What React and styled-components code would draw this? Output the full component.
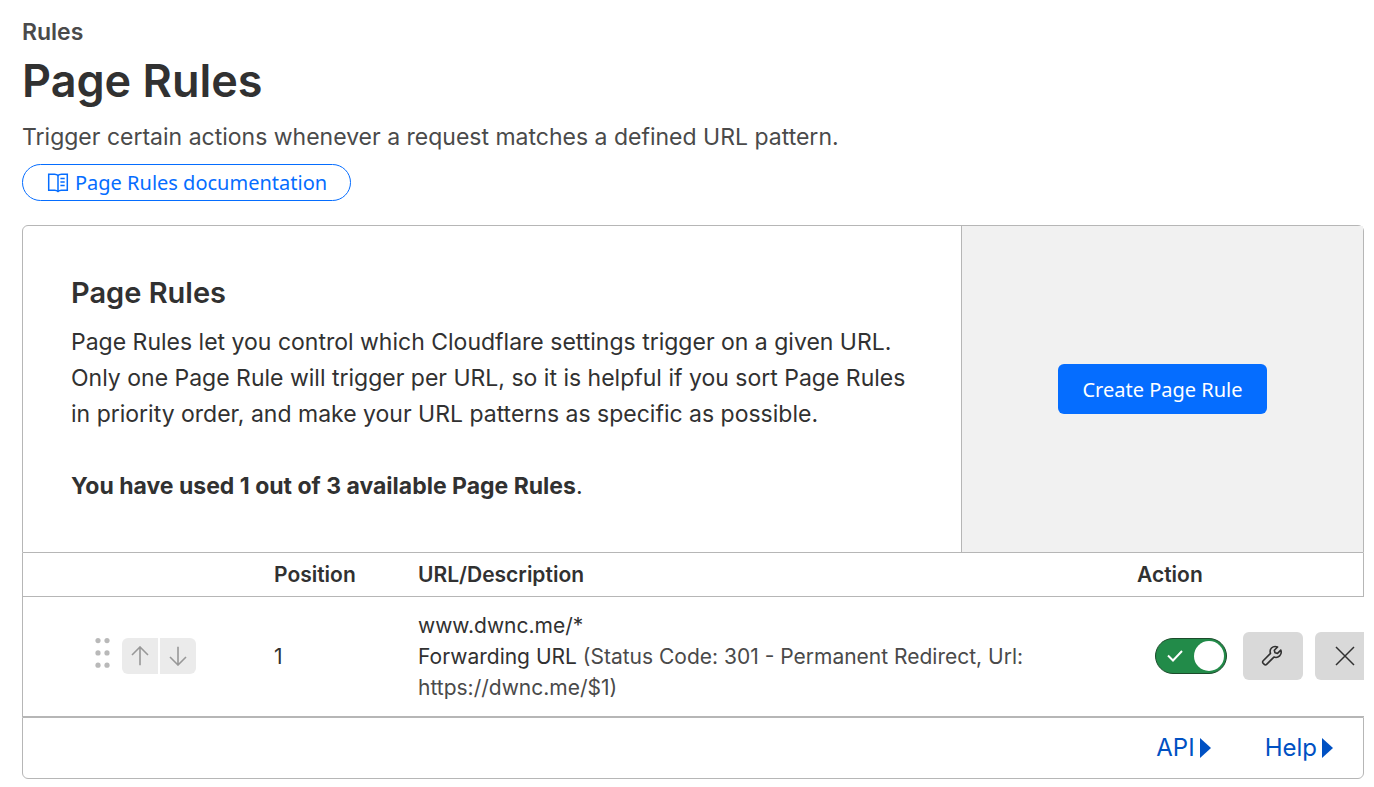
import styled, { createGlobalStyle, css } from 'styled-components';

const GlobalStyle = createGlobalStyle`
  *, *::before, *::after {
    box-sizing: border-box;
  }
  body {
    margin: 0;
    background: #fff;
    color: #313131;
    font-family: Inter, "Liberation Sans", sans-serif;
    font-size: 23px;
    line-height: 36px;
  }
  h1, h2, p {
    margin: 0;
  }
  button {
    font-family: inherit;
    cursor: pointer;
  }
`;

const line = '#b6b6b6';

const Page = styled.main`
  padding: 14px 10px 8px 22px;
`;

const Section = styled.p`
  font-weight: 600;
  color: #4a4a4a;
`;

const Title = styled.h1`
  font-size: 45px;
  line-height: 62px;
  font-weight: 600;
`;

const Lead = styled.p`
  margin-top: 7px;
  color: #4a4a4a;
`;

const DocsLink = styled.a`
  display: inline-flex;
  align-items: center;
  gap: 6px;
  height: 37px;
  margin: 9px 0 24px;
  padding: 0 23px 0 24px;
  border: 1px solid #056dff;
  border-radius: 20px;
  color: #056dff;
  font-family: "Noto Sans", sans-serif;
  font-size: 20px;
  text-decoration: none;
  vertical-align: top;
`;

const Summary = styled.section`
  display: grid;
  grid-template-columns: 7fr 3fr;
  border: 1px solid ${line};
  border-radius: 6px 6px 0 0;
`;

const SummaryText = styled.div`
  padding: 48px;
`;

const SummaryTitle = styled.h2`
  margin-bottom: 12px;
  font-size: 29px;
  line-height: 38px;
  font-weight: 600;
`;

const Usage = styled.p`
  padding-top: 36px;
`;

const SummarySide = styled.div`
  display: flex;
  align-items: center;
  justify-content: center;
  border-left: 1px solid ${line};
  background: #f1f1f1;
`;

const CreateButton = styled.button`
  height: 50px;
  padding: 0 24px;
  border: 0;
  border-radius: 6px;
  background: #056dff;
  color: #fff;
  font-family: "Noto Sans", sans-serif;
  font-size: 20px;
`;

const TableWrap = styled.div`
  overflow: hidden;
  border-left: 1px solid ${line};
`;

const Table = styled.table`
  width: 100%;
  table-layout: fixed;
  border-collapse: separate;
  border-spacing: 0;
  font-size: 21px;
  line-height: 31px;
`;

const HeadCell = styled.th`
  width: ${(p) => p.$width || 'auto'};
  height: 44px;
  padding: 0 12px;
  border-bottom: 1px solid ${line};
  font-weight: 600;
  text-align: left;
  &:last-child {
    border-right: 1px solid ${line};
  }
`;

const Cell = styled.td`
  height: 120px;
  padding: 11px 12px 12px;
  border-bottom: 1px solid ${line};
`;

const Detail = styled.span`
  color: #4a4a4a;
`;

const OrderControls = styled.div`
  display: flex;
  align-items: flex-start;
  gap: 12px;
  padding-left: 60px;
`;

const OrderButtons = styled.div`
  display: flex;
  gap: 2px;
`;

const iconButton = css`
  display: flex;
  flex: none;
  align-items: center;
  justify-content: center;
  padding: 0;
  border: 0;
`;

const OrderButton = styled.button`
  ${iconButton}
  width: 36px;
  height: 36px;
  border-radius: ${(p) => (p.$side === 'left' ? '6px 0 0 6px' : '0 6px 6px 0')};
  background: #ebebeb;
  color: #989898;
`;

const RowActions = styled.div`
  display: flex;
  align-items: center;
  gap: 12px;
  padding-left: 18px;
`;

const ActionButton = styled.button`
  ${iconButton}
  width: 60px;
  height: 48px;
  border-radius: 6px;
  background: #d9d9d9;
  color: #313131;
`;

const Toggle = styled.label`
  display: flex;
  flex: none;
  align-items: center;
  justify-content: space-between;
  width: 72px;
  height: 36px;
  margin-right: 4px;
  padding: 0 2px 0 11px;
  border: 1px solid #1c4b2b;
  border-radius: 18px;
  background: #228b49;
  cursor: pointer;
  &:not(:has(input:checked)) {
    flex-direction: row-reverse;
    padding: 0 11px 0 2px;
    background: #797979;
  }
`;

const ToggleInput = styled.input`
  appearance: none;
  width: 30px;
  height: 30px;
  margin: 0;
  border-radius: 50%;
  background: #fff;
  cursor: pointer;
`;

const Footer = styled.footer`
  display: flex;
  align-items: center;
  justify-content: flex-end;
  gap: 54px;
  height: 62px;
  padding-right: 30px;
  border: 1px solid ${line};
  border-radius: 0 0 6px 6px;
  font-size: 24px;
`;

const FooterLink = styled.a`
  display: flex;
  align-items: center;
  gap: 5px;
  color: #0051c3;
  text-decoration: none;
`;

function BookIcon() {
  return (
    <svg width="22" height="20" viewBox="0 0 22 20" fill="none" stroke="currentColor" strokeWidth="1.5" aria-hidden="true">
      <path d="M11 2.5C10 1.4 9 1.2 7.5 1.2H1.7v16h6.1c1.3 0 2.3.3 3.2 1.3.9-1 1.9-1.3 3.2-1.3h6.100v-16h-5.800C13 1.200 12 1.400 11 2.500z" />
      <path d="M11 2.500v16M13.400 5.500h4.300M13.400 9h4.300M13.400 12.500h4.300" />
    </svg>
  );
}

function DragIcon() {
  return (
    <svg width="15" height="30" viewBox="0 0 15 30" fill="#b9b9b9" aria-hidden="true">
      {[2, 14.3, 26.6].map((y) => (
        <g key={y}>
          <circle cx="3" cy={y + 0.6} r="2.6" />
          <circle cx="12" cy={y + 0.6} r="2.6" />
        </g>
      ))}
    </svg>
  );
}

function ArrowIcon({ down }) {
  return (
    <svg width="20" height="20" viewBox="0 0 20 20" fill="none" stroke="currentColor" strokeWidth="1.6" aria-hidden="true">
      <path d={down ? 'M10 .8v18M2 11l8 8 8-8' : 'M10 19.2v-18M2 9l8-8 8 8'} />
    </svg>
  );
}

function CheckIcon() {
  return (
    <svg width="16" height="12" viewBox="0 0 16 12" fill="none" stroke="#fff" strokeWidth="2" aria-hidden="true">
      <path d="M1 5.5l5 5L15 1" />
    </svg>
  );
}

function WrenchIcon() {
  return (
    <svg width="24" height="24" viewBox="1 0 24 24" fill="none" stroke="currentColor" strokeWidth="1.6" strokeLinejoin="round" aria-hidden="true">
      <path d="M17.600 3c-2.200-.9-4.600-.5-6.100 1-1.400 1.500-1.700 3.500-1 5.400L3.200 16.800c-.8.800-.8 1.700-.1 2.400l1.200 1.200c.7.700 1.600.7 2.300 0l7.300-7.300c2 .7 4.200.3 5.700-1.200 1.600-1.600 2-3.700 1.200-5.800l-3.300 3.300-2.500-.6-.7-2.500z" />
    </svg>
  );
}

function CloseIcon() {
  return (
    <svg width="20" height="20" viewBox="0 0 20 20" fill="none" stroke="currentColor" strokeWidth="1.5" aria-hidden="true">
      <path d="M1 1l18 18M19 1L1 19" />
    </svg>
  );
}

function CaretIcon() {
  return (
    <svg width="11" height="20" viewBox="0 0 11 20" fill="currentColor" aria-hidden="true">
      <path d="M0 0v20l11-10z" />
    </svg>
  );
}

const rules = [
  {
    position: 1,
    url: 'www.dwnc.me/*',
    action: 'Forwarding URL',
    detail: '(Status Code: 301 - Permanent Redirect, Url: https://dwnc.me/$1)',
  },
];

function RuleRow({ rule }) {
  return (
    <tr>
      <Cell>
        <OrderControls>
          <DragIcon />
          <OrderButtons>
            <OrderButton $side="left" aria-label="Move up"><ArrowIcon /></OrderButton>
            <OrderButton $side="right" aria-label="Move down"><ArrowIcon down /></OrderButton>
          </OrderButtons>
        </OrderControls>
      </Cell>
      <Cell>{rule.position}</Cell>
      <Cell>
        {rule.url}
        <br />
        {rule.action} <Detail>{rule.detail}</Detail>
      </Cell>
      <Cell>
        <RowActions>
          <Toggle>
            <CheckIcon />
            <ToggleInput type="checkbox" defaultChecked aria-label="Rule enabled" />
          </Toggle>
          <ActionButton aria-label="Edit"><WrenchIcon /></ActionButton>
          <ActionButton aria-label="Delete"><CloseIcon /></ActionButton>
        </RowActions>
      </Cell>
    </tr>
  );
}

function App() {
  return (
    <>
      <GlobalStyle />
      <Page>
        <Section>Rules</Section>
        <Title>Page Rules</Title>
        <Lead>Trigger certain actions whenever a request matches a defined URL pattern.</Lead>
        <DocsLink href="#docs">
          <BookIcon />
          Page Rules documentation
        </DocsLink>
        <Summary>
          <SummaryText>
            <SummaryTitle>Page Rules</SummaryTitle>
            <p>
              Page Rules let you control which Cloudflare settings trigger on a given URL. Only one
              Page Rule will trigger per URL, so it is helpful if you sort Page Rules in priority
              order, and make your URL patterns as specific as possible.
            </p>
            <Usage><strong>You have used 1 out of 3 available Page Rules</strong>.</Usage>
          </SummaryText>
          <SummarySide>
            <CreateButton>Create Page Rule</CreateButton>
          </SummarySide>
        </Summary>
        <TableWrap>
          <Table>
            <thead>
              <tr>
                <HeadCell $width="239px" aria-label="Order" />
                <HeadCell $width="144px">Position</HeadCell>
                <HeadCell>URL/Description</HeadCell>
                <HeadCell $width="239px">Action</HeadCell>
              </tr>
            </thead>
            <tbody>
              {rules.map((rule) => <RuleRow key={rule.position} rule={rule} />)}
            </tbody>
          </Table>
        </TableWrap>
        <Footer>
          <FooterLink href="#api">API<CaretIcon /></FooterLink>
          <FooterLink href="#help">Help<CaretIcon /></FooterLink>
        </Footer>
      </Page>
    </>
  );
}

export default App;
